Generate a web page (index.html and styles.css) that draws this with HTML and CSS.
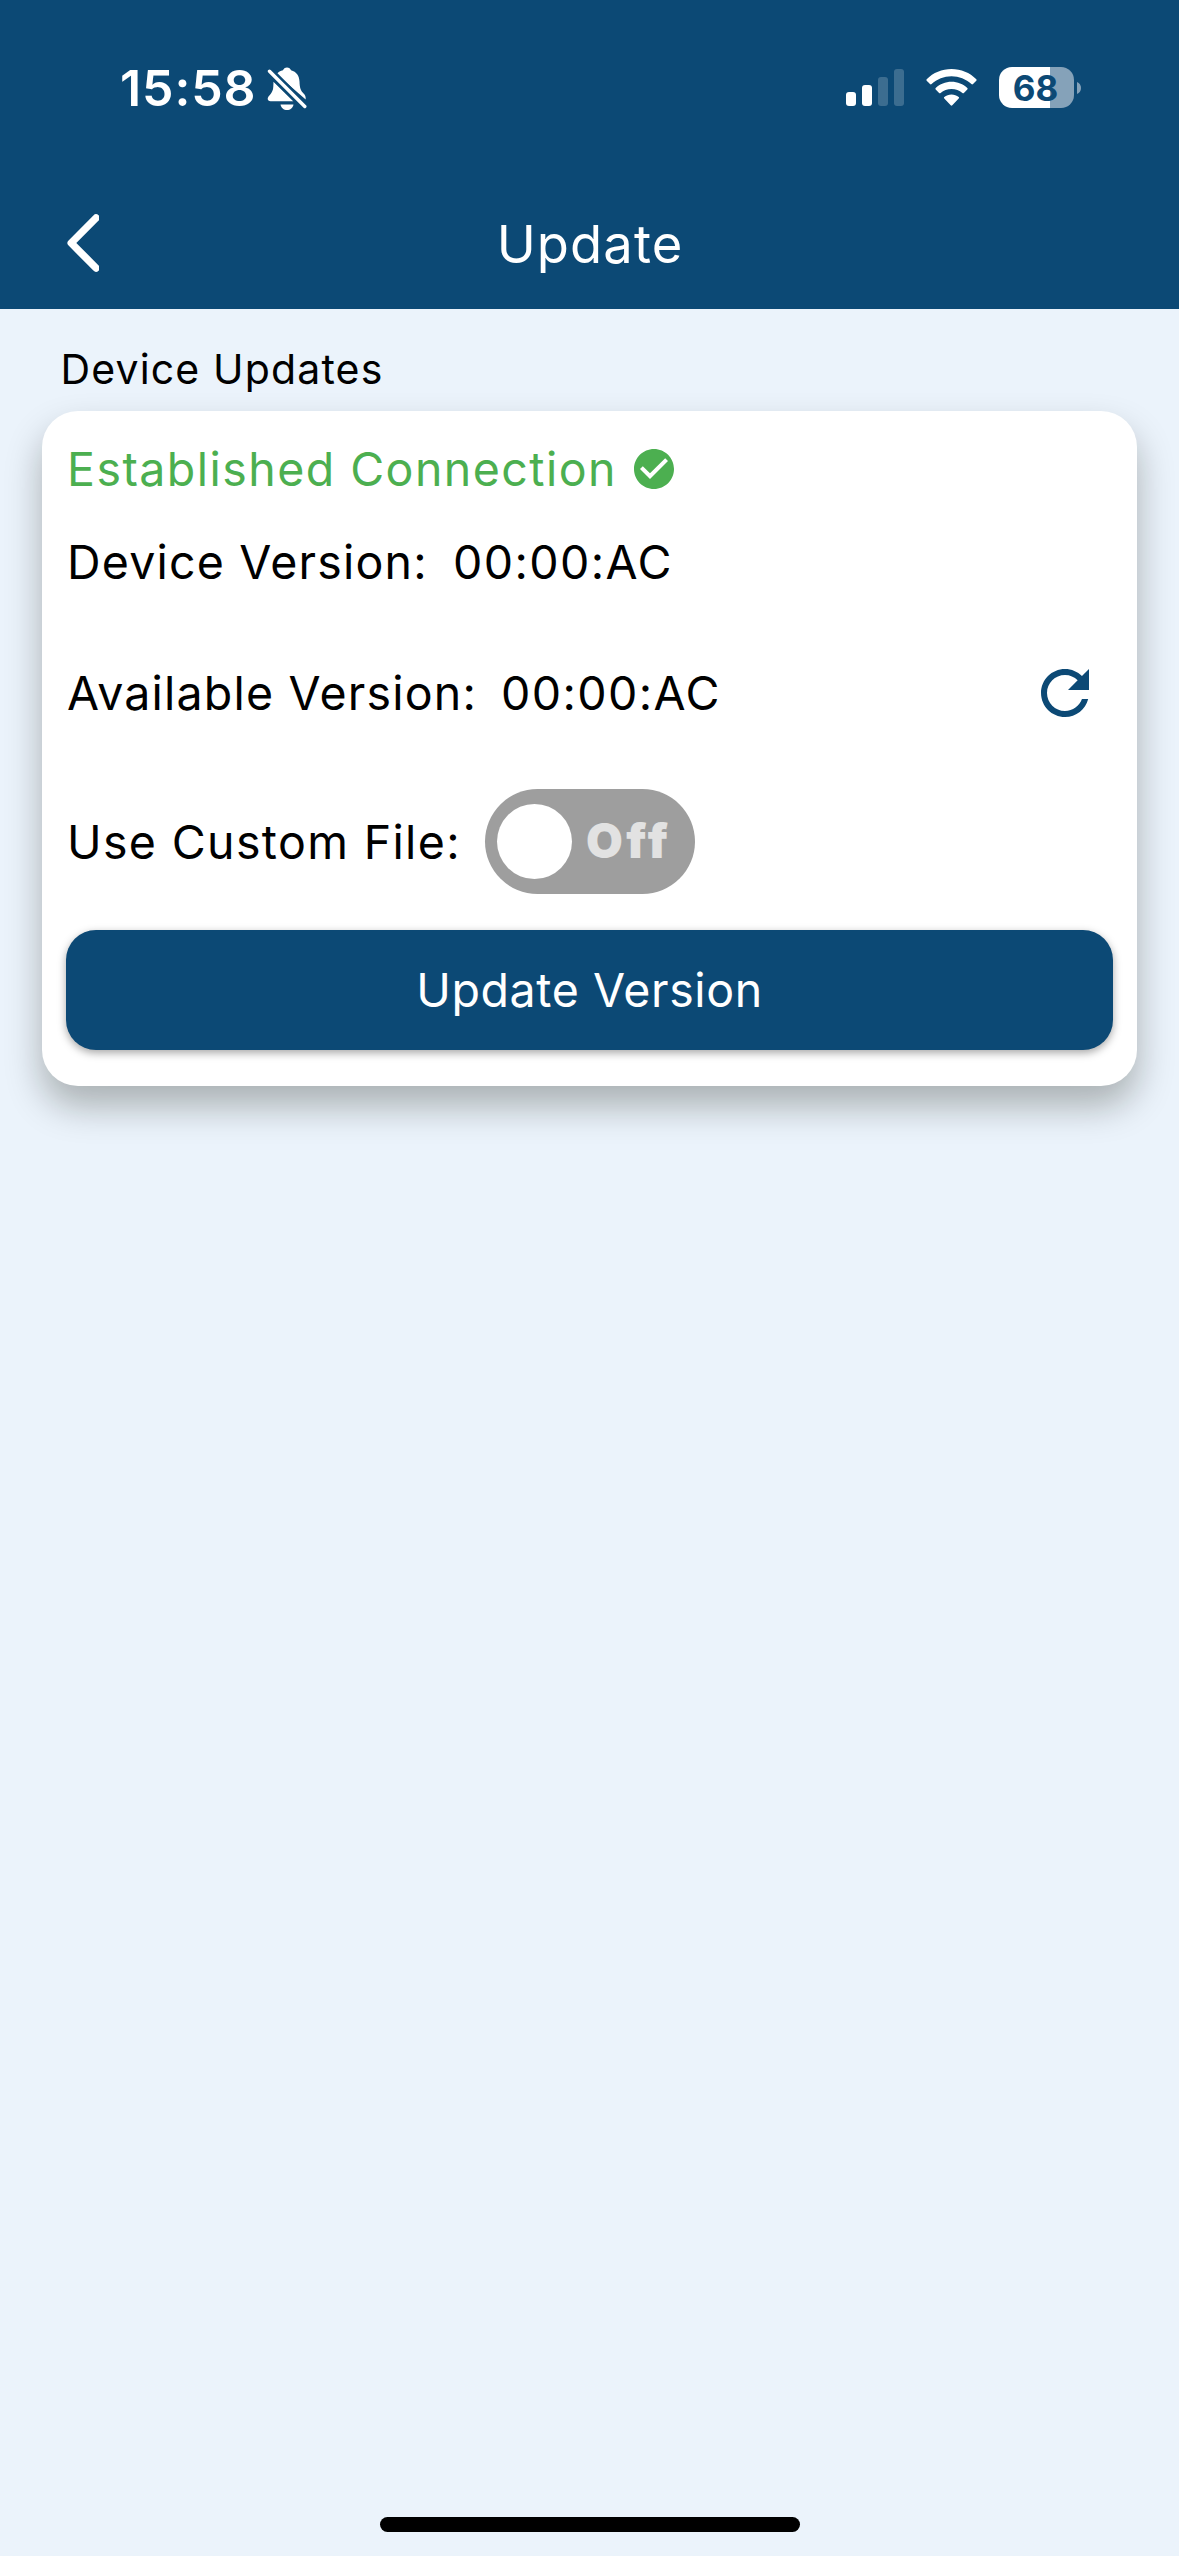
FILE: index.html
```html
<!DOCTYPE html>
<html lang="en">
<head>
<meta charset="utf-8">
<title>Update</title>
<link rel="stylesheet" href="styles.css">
</head>
<body>
<div class="screen">
  <header class="header">
    <div class="status-bar">
      <span class="time">15:58</span>
      <svg class="bell" viewBox="0 0 40 44" width="40" height="44" fill="#fff">
        <path d="M9.5 7.2C11.3 5 13.600 3.800 16 3.300 16.500 1.400 18 .4 20 .4s3.500 1 4 2.900c5.400 1.500 8.300 5.600 8.500 11.200.2 6.800 1.200 9.200 4.300 12.200 1.400 1.400 2 2.700 1.900 5.800Z"/>
        <path d="M6.500 14.800 26.300 34.300H3.600C1.800 34.300.7 33.300.7 31.800c0-3.300 5.500-5 5.600-12.400Z"/>
        <path d="M13.500 37.400h13c-.6 3.400-3.200 5.600-6.500 5.600s-5.900-2.200-6.500-5.600Z"/>
        <path d="M2.500 4.200 37.800 39.500" stroke="#0c4975" stroke-width="8.500"/>
        <path d="M2.500 4.200 37.800 39.500" stroke="#fff" stroke-width="3.400" stroke-linecap="round"/>
      </svg>
      <div class="indicators">
        <svg class="signal" viewBox="0 0 58 37" width="58" height="37" fill="#fff">
          <rect x="0" y="23" width="10" height="14" rx="3"/>
          <rect x="16" y="16" width="10" height="21" rx="3"/>
          <rect x="32" y="8" width="10" height="29" rx="3" opacity=".2"/>
          <rect x="48" y="0" width="10" height="37" rx="3" opacity=".2"/>
        </svg>
        <svg class="wifi" viewBox="0 0 51 37" width="51" height="37" fill="#fff">
          <path d="M25.500 0C35 0 43.800 3.700 50.300 10.200c.5.5.5 1.100 0 1.600L47 15c-.5.500-1.100.500-1.600 0C40 10 33 7.200 25.500 7.200S11 10 5.600 15c-.5.500-1.100.500-1.600 0L.7 11.800c-.5-.5-.5-1.100 0-1.600C7.200 3.700 16 0 25.500 0Z"/>
          <path d="M25.500 12.800c6.100 0 11.600 2.300 15.800 6.100.5.500.5 1.100 0 1.600L37.900 24c-.4.400-1 .4-1.500 0-3-2.600-6.700-4.100-10.900-4.100S17.600 21.400 14.600 24c-.5.400-1.100.4-1.500 0l-3.400-3.500c-.5-.5-.5-1.100 0-1.600 4.200-3.800 9.700-6.100 15.800-6.100Z"/>
          <path d="M25.500 25.400c2.700 0 5.200.9 7.200 2.500.5.400.5 1 0 1.500l-6.400 6.900c-.5.500-1.100.5-1.600 0l-6.400-6.900c-.5-.5-.5-1.100 0-1.500 2-1.600 4.500-2.500 7.200-2.500Z"/>
        </svg>
        <div class="battery"><div class="battery-body">68</div><svg viewBox="0 0 4 12" width="4" height="12"><path d="M0 0c2.500 1 4 3.300 4 6s-1.500 5-4 6Z" fill="#85a2b9"/></svg></div>
      </div>
    </div>
    <div class="nav">
      <svg class="back" viewBox="0 0 34 58" width="34" height="58" fill="none" stroke="#fff" stroke-width="7.400" stroke-linecap="round" stroke-linejoin="round"><path d="M31 4 6.200 29 31 54"/></svg>
      <h1 class="title">Update</h1>
    </div>
  </header>
  <main class="content">
    <h2 class="section">Device Updates</h2>
    <section class="card">
      <div class="row connection"><span class="established">Established Connection</span>
        <svg viewBox="2 2 20 20" width="40" height="40" fill="#4caf50"><path d="M12 2C6.480 2 2 6.480 2 12s4.480 10 10 10 10-4.480 10-10S17.520 2 12 2zm-2 15l-5-5 1.410-1.410L10 14.170l7.590-7.590L19 8l-9 9z"/></svg>
      </div>
      <div class="row device"><span class="label">Device Version:</span><span class="value">00:00:AC</span></div>
      <div class="row available"><span class="label">Available Version:</span><span class="value">00:00:AC</span>
        <svg class="refresh" viewBox="4 4 16 16" width="48" height="48" fill="#0c4975"><path d="M17.650 6.350C16.200 4.900 14.210 4 12 4c-4.420 0-7.990 3.580-7.990 8s3.570 8 7.990 8c3.730 0 6.840-2.550 7.730-6h-2.080c-.820 2.330-3.040 4-5.650 4-3.310 0-6-2.690-6-6s2.690-6 6-6c1.660 0 3.140.69 4.220 1.780L13 11h7V4l-2.350 2.350z"/></svg>
      </div>
      <div class="row custom"><span class="label use">Use Custom File:</span>
        <div class="toggle"><span class="knob"></span><span class="off">Off</span></div>
      </div>
      <button class="update">Update Version</button>
    </section>
  </main>
  <div class="home"></div>
</div>
</body>
</html>
```
FILE: styles.css
```css
* { box-sizing: border-box; }
body { margin: 0; }
.screen {
  width: 1179px;
  height: 2556px;
  display: flex;
  flex-direction: column;
  background: #ebf3fb;
  color: #000;
  font-family: Inter, "Liberation Sans", sans-serif;
}
h1, h2 { margin: 0; font-weight: 400; }
svg { display: block; flex: none; }
span { white-space: nowrap; }
.header { height: 309px; background: #0c4975; color: #fff; }
.status-bar {
  height: 177px;
  display: flex;
  align-items: flex-start;
  padding: 67px 98px 0 120px;
}
.time { width: 147px; font-size: 50px; line-height: 42px; font-weight: 600; letter-spacing: .9px; }
.indicators { margin-left: auto; display: flex; align-items: flex-start; }
.signal { margin-top: 2px; }
.wifi { margin: 2px 22px 0; }
.battery { display: flex; align-items: center; gap: 3px; }
.battery-body {
  width: 75px;
  height: 41px;
  border-radius: 13px;
  background: linear-gradient(90deg, #fff 51px, #85a2b9 51px);
  color: #0c4975;
  font-size: 35px;
  line-height: 42px;
  font-weight: 700;
  text-align: center;
  padding-right: 2px;
}
.nav { height: 132px; padding: 0 65px; display: grid; grid-template-columns: 34px 1fr 34px; }
.back { margin-top: 37px; }
.title { font-size: 52.500px; line-height: 60px; padding: 37px 0 0 1px; text-align: center; letter-spacing: 1.100px; }
.content { flex: 1; padding: 0 42px; }
.section { height: 102px; padding: 35px 0 0 18.500px; font-size: 41px; line-height: 50px; letter-spacing: 1.150px; }
.card {
  height: 675px;
  padding: 29px 24px 36px;
  border-radius: 36px;
  background: #fff;
  box-shadow: 0 20px 36px rgba(10, 14, 0, .29);
  font-size: 46.500px;
  line-height: 58px;
  letter-spacing: 1.500px;
  display: flex;
  flex-direction: column;
}
.row { display: flex; align-items: center; }
.connection { height: 58px; color: #4caf50; }
.established { width: 568px; padding-left: 1px; letter-spacing: 1.450px; }
.label { padding-left: 1px; letter-spacing: 1.200px; }
.device { height: 58px; margin-top: 35px; }
.available { height: 58px; margin-top: 73px; padding-right: 24px; }
.refresh { margin-left: auto; }
.device .label { width: 387px; }
.available .label { width: 435px; }
.value { letter-spacing: 1.400px; }
.custom { height: 105px; margin-top: 67px; }
.use { width: 419px; letter-spacing: 1.350px; }
.toggle { width: 210px; height: 105px; border-radius: 53px; background: #9e9e9e; display: flex; align-items: center; padding-left: 12px; gap: 14px; }
.knob { width: 75px; height: 75px; border-radius: 50%; background: #fff; }
.off { color: #e2e2e2; font-size: 47.500px; font-weight: 900; letter-spacing: 3.500px; position: relative; top: -1px; }
.update {
  width: 1047px;
  height: 120px;
  margin-top: 36px;
  padding: 0;
  border: 0;
  border-radius: 30px;
  background: #0c4975;
  color: #fff;
  font: 400 46.500px/120px Inter, "Liberation Sans", sans-serif;
  letter-spacing: .6px;
  box-shadow: 0 3px 8px rgba(0, 0, 0, .35);
}
.home { width: 420px; height: 15px; margin: 0 auto 24px; border-radius: 8px; background: #000; }
```
